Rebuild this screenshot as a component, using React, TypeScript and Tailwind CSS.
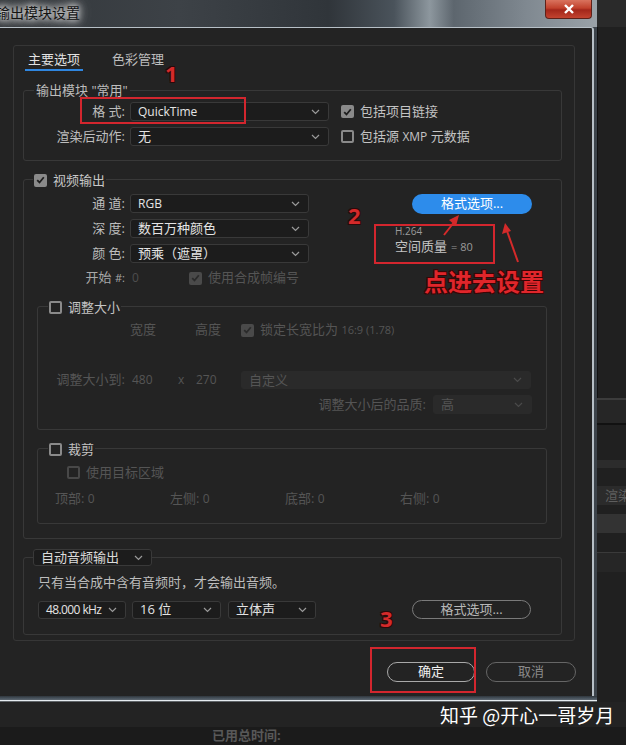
import React from "react";

const Chevron = ({ color = "#9a9a9a" }: { color?: string }) => (
  <svg width="9" height="6" viewBox="0 0 9 6" fill="none">
    <path d="M1 1l3.5 3.5L8 1" stroke={color} strokeWidth="1.2" />
  </svg>
);

function Select({
  className,
  text,
  dim = false,
  textCls = "",
}: {
  className: string;
  text: string;
  dim?: boolean;
  textCls?: string;
}) {
  return (
    <div
      className={`flex shrink-0 items-center justify-between rounded-[3px] border pl-[7px] pr-[8px] ${
        dim
          ? "border-[#2a2a2a] bg-[#2a2a2a] text-[#555555]"
          : "border-[#393939] bg-[#1c1c1c] text-[#e4e4e4]"
      } ${className}`}
    >
      <span className={`leading-none ${textCls}`}>{text}</span>
      <Chevron color={dim ? "#4a4a4a" : "#9a9a9a"} />
    </div>
  );
}

function Check({
  checked = false,
  dim = false,
  className = "",
}: {
  checked?: boolean;
  dim?: boolean;
  className?: string;
}) {
  if (checked) {
    return (
      <div
        className={`flex h-[13px] w-[13px] shrink-0 items-center justify-center rounded-[2px] ${
          dim ? "bg-[#4a4a4a]" : "bg-[#8a8a8a]"
        } ${className}`}
      >
        <svg width="9" height="8" viewBox="0 0 9 8" fill="none">
          <path
            d="M1.2 4.2l2.3 2.3L7.8 1.2"
            stroke={dim ? "#2b2b2b" : "#1e1e1e"}
            strokeWidth="1.8"
          />
        </svg>
      </div>
    );
  }
  return (
    <div
      className={`h-[13px] w-[13px] shrink-0 rounded-[2px] border-2 ${
        dim ? "border-[#484848]" : "border-[#8a8a8a]"
      } ${className}`}
    />
  );
}

function Group({
  legend,
  legendCls,
  className,
  children,
}: {
  legend: React.ReactNode;
  legendCls: string;
  className: string;
  children: React.ReactNode;
}) {
  return (
    <div className={`relative rounded-[3px] border border-[#383838] ${className}`}>
      <div className={`absolute flex items-center bg-[#232323] ${legendCls}`}>{legend}</div>
      {children}
    </div>
  );
}

export default function App() {
  return (
    <div className="relative h-[745px] w-[626px] overflow-hidden bg-[#1f1f1f] font-['Open_Sans','Noto_Sans_CJK_SC',sans-serif] text-[13px] text-[#c4c4c4]">
      <div className="flex h-[702px]">
        {/* window */}
        <div className="flex w-[597px] flex-col">
          {/* title bar */}
          <div className="flex h-[27px] items-start bg-[linear-gradient(90deg,#33373b_0%,#3d4247_30%,#30353a_55%,#4a535b_66%,#8d979e_72%,#5d666e_76%,#7f8890_88%,#9aa2a8_100%)]">
            <span className="-ml-[4px] mt-[4px] whitespace-nowrap text-[14px] leading-[18px] text-[#141414] [text-shadow:0_0_6px_#ffffff,0_0_10px_#e0e0e0,0_0_14px_#c8c8c8]">
              输出模块设置
            </span>
            <div className="ml-auto mr-[5px] flex h-[19px] w-[47px] items-center justify-center rounded-b-[4px] border border-t-0 border-[#5e2119] bg-[linear-gradient(180deg,#d9735e_0%,#c1412c_45%,#a3261a_55%,#c2432f_100%)]">
              <svg width="12" height="10" viewBox="0 0 12 10">
                <path d="M2 1l8 8M10 1L2 9" stroke="#ffffff" strokeWidth="2.4" />
              </svg>
            </div>
          </div>
          {/* body */}
          <div className="flex flex-1 bg-[#3d444b] pr-[3px]">
            <div className="flex flex-1 flex-col rounded-tr-[3px] border-r-2 border-t border-[#b7c0c7] bg-[#232323] pl-[13px] pt-[17px]">
              {/* panel */}
              <div className="flex h-[596px] w-[562px] flex-col rounded-[3px] border border-[#363636]">
                {/* tabs */}
                <div className="ml-[11px] mt-[5px] flex gap-[26px]">
                  <div className="border-b-2 border-[#2f86e0] px-[3px] pb-[2px] leading-[16px] text-[#e2e2e2]">
                    主要选项
                  </div>
                  <div className="px-[3px] leading-[16px] text-[#bdbdbd]">色彩管理</div>
                </div>

                {/* 输出模块 */}
                <Group
                  className="ml-[9px] mt-[19px] w-[539px]"
                  legendCls="-top-[9px] left-[10px] px-[2px] leading-[16px]"
                  legend={<span className="text-[#bdbdbd]">输出模块 "常用"</span>}
                >
                  <div className="flex flex-col gap-[6px] pb-[14px] pt-[11px]">
                    <div className="flex h-[19px] items-center">
                      <span className="w-[101px] text-right text-[#bdbdbd]">格 式:</span>
                      <Select className="ml-[5px] h-[19px] w-[199px]" text="QuickTime" textCls="text-[12px]" />
                      <Check checked className="ml-[12px]" />
                      <span className="ml-[6px] text-[#c4c4c4]">包括项目链接</span>
                    </div>
                    <div className="flex h-[19px] items-center">
                      <span className="w-[101px] text-right text-[#bdbdbd]">渲染后动作:</span>
                      <Select className="ml-[5px] h-[19px] w-[199px]" text="无" />
                      <Check className="ml-[12px]" />
                      <span className="ml-[6px] text-[#c4c4c4]">
                        包括源 <span className="text-[12px]">XMP</span> 元数据
                      </span>
                    </div>
                  </div>
                </Group>

                {/* 视频输出 */}
                <Group
                  className="ml-[9px] mt-[18px] w-[539px] pb-[14px]"
                  legendCls="-top-[8px] left-[9px] px-[1px] leading-[16px]"
                  legend={
                    <>
                      <Check checked />
                      <span className="ml-[6px] text-[#c8c8c8]">视频输出</span>
                    </>
                  }
                >
                  <div className="flex pt-[14px]">
                    <div className="flex w-[285px] flex-col gap-[6px]">
                      <div className="flex h-[19px] items-center">
                        <span className="w-[101px] text-right text-[#bdbdbd]">通 道:</span>
                        <Select className="ml-[5px] h-[19px] w-[179px]" text="RGB" textCls="text-[12px]" />
                      </div>
                      <div className="flex h-[19px] items-center">
                        <span className="w-[101px] text-right text-[#bdbdbd]">深 度:</span>
                        <Select className="ml-[5px] h-[19px] w-[179px]" text="数百万种颜色" />
                      </div>
                      <div className="flex h-[19px] items-center">
                        <span className="w-[101px] text-right text-[#bdbdbd]">颜 色:</span>
                        <Select className="ml-[5px] h-[19px] w-[179px]" text="预乘（遮罩）" />
                      </div>
                      <div className="mt-[2px] flex h-[14px] items-center">
                        <span className="w-[101px] text-right text-[#a8a8a8]">
                          开始 <span className="text-[11px]">#:</span>
                        </span>
                        <span className="ml-[7px] w-[7px] text-[12px] text-[#4e4e4e]">0</span>
                        <Check checked dim className="ml-[50px]" />
                        <span className="ml-[6px] text-[#555555]">使用合成帧编号</span>
                      </div>
                    </div>
                    <div className="ml-[86px] flex flex-col">
                      <div className="ml-[17px] flex h-[20px] w-[120px] items-center justify-center rounded-full bg-[#2d8ceb] text-white">
                        格式选项...
                      </div>
                      <div className="mt-[12px] h-[11px] text-[10px] leading-[11px] text-[#9a9a9a]">H.264</div>
                      <div className="mt-[2px] flex h-[15px] items-end leading-[15px] text-[#c4c4c4]">
                        空间质量<span className="ml-[4px] text-[11px] leading-[14px] text-[#9a9a9a]">= 80</span>
                      </div>
                    </div>
                  </div>

                  {/* 调整大小 */}
                  <Group
                    className="ml-[13px] mt-[21px] w-[510px] pb-[15px]"
                    legendCls="-top-[8px] left-[10px] px-[1px] leading-[16px]"
                    legend={
                      <>
                        <Check />
                        <span className="ml-[6px] text-[#c4c4c4]">调整大小</span>
                      </>
                    }
                  >
                    <div className="mt-[16px] flex h-[14px] items-center pl-[92px] text-[#555555]">
                      <span className="w-[65px]">宽度</span>
                      <span className="w-[46px]">高度</span>
                      <Check checked dim />
                      <span className="ml-[6px]">
                        锁定长宽比为 <span className="text-[11px]">16:9 (1.78)</span>
                      </span>
                    </div>
                    <div className="mt-[34px] flex h-[18px] items-center text-[#555555]">
                      <span className="w-[87px] text-right">调整大小到:</span>
                      <span className="ml-[7px] w-[46px] text-[12px]">480</span>
                      <span className="w-[18px] text-[12px]">x</span>
                      <span className="w-[45px] text-[12px]">270</span>
                      <Select dim className="h-[18px] w-[290px]" text="自定义" />
                    </div>
                    <div className="mt-[6px] flex h-[19px] items-center justify-end pr-[14px] text-[#555555]">
                      <span>调整大小后的品质:</span>
                      <Select dim className="ml-[7px] h-[19px] w-[99px]" text="高" />
                    </div>
                  </Group>

                  {/* 裁剪 */}
                  <Group
                    className="ml-[13px] mt-[18px] w-[510px] pb-[18px]"
                    legendCls="-top-[8px] left-[10px] px-[1px] leading-[16px]"
                    legend={
                      <>
                        <Check />
                        <span className="ml-[6px] text-[#c4c4c4]">裁剪</span>
                      </>
                    }
                  >
                    <div className="mt-[17px] flex h-[13px] items-center pl-[29px] text-[#555555]">
                      <Check dim />
                      <span className="ml-[6px]">使用目标区域</span>
                    </div>
                    <div className="mt-[13px] flex h-[13px] items-center pl-[17px] text-[#555555]">
                      <span className="w-[115px]">
                        顶部: <span className="text-[12px]">0</span>
                      </span>
                      <span className="w-[115px]">
                        左侧: <span className="text-[12px]">0</span>
                      </span>
                      <span className="w-[115px]">
                        底部: <span className="text-[12px]">0</span>
                      </span>
                      <span className="w-[115px]">
                        右侧: <span className="text-[12px]">0</span>
                      </span>
                    </div>
                  </Group>
                </Group>

                {/* 音频 */}
                <Group
                  className="ml-[9px] mt-[18px] w-[539px] pb-[15px]"
                  legendCls="-top-[9px] left-[9px]"
                  legend={<Select className="h-[17px] w-[119px]" text="自动音频输出" textCls="text-[#dcdcdc]" />}
                >
                  <div className="mt-[18px] flex h-[14px] items-center pl-[14px] text-[#bdbdbd]">
                    只有当合成中含有音频时，才会输出音频。
                  </div>
                  <div className="mt-[10px] flex h-[19px] items-center pl-[14px]">
                    <Select className="h-[18px] w-[88px]" text="48.000 kHz" textCls="text-[12px] tracking-[-0.6px]" />
                    <Select className="ml-[6px] h-[18px] w-[89px]" text="16 位" />
                    <Select className="ml-[7px] h-[18px] w-[88px]" text="立体声" />
                    <div className="ml-[96px] flex h-[19px] w-[119px] items-center justify-center rounded-full border border-[#7a7a7a] text-[#b8b8b8]">
                      格式选项...
                    </div>
                  </div>
                </Group>
              </div>

              {/* buttons */}
              <div className="mt-[21px] flex w-[563px] justify-end gap-[11px]">
                <div className="flex h-[20px] w-[88px] items-center justify-center rounded-full border border-[#a9a9a9] text-[#f0f0f0]">
                  确定
                </div>
                <div className="flex h-[20px] w-[90px] items-center justify-center rounded-full border border-[#666666] text-[#8a8a8a]">
                  取消
                </div>
              </div>
            </div>
          </div>
          {/* bottom frame */}
          <div className="h-[6px] bg-[linear-gradient(180deg,#2f363d_0%,#4d5862_45%,#59636c_60%,#e6ecf0_75%,#1d2125_100%)]" />
        </div>
        {/* right strip of app behind */}
        <div className="flex min-w-0 flex-1 flex-col overflow-hidden bg-[#202020]">
          <div className="h-[27px] shrink-0 bg-[#2a2a2a]" />
          <div className="h-[371px] shrink-0 border-l border-[#111111]" />
          <div className="h-[2px] shrink-0 bg-[#3c3c3c]" />
          <div className="h-[23px] shrink-0 bg-[#262626]" />
          <div className="h-[2px] shrink-0 bg-[#111111]" />
          <div className="h-[35px] shrink-0" />
          <div className="h-[8px] shrink-0 bg-[#2c2c2c]" />
          <div className="h-[18px] shrink-0" />
          <div className="flex h-[19px] shrink-0 items-center whitespace-nowrap bg-[#2b2b2b] pl-[8px] text-[#5e5e5e]">
            渲染
          </div>
          <div className="h-[9px] shrink-0" />
          <div className="h-[19px] shrink-0 bg-[#333333]" />
          <div className="h-[19px] shrink-0" />
          <div className="h-[20px] shrink-0 border-t border-[#3a3a3a] bg-[#262626]" />
          <div className="flex-1" />
        </div>
      </div>
      <div className="h-[25px] bg-[#232323]" />
      <div className="flex h-[18px] items-center bg-[#1b1b1b] pl-[212px] text-[13px] font-bold text-[#585858]">
        已用总时间:
      </div>

      {/* annotations overlay */}
      <div className="pointer-events-none absolute inset-0">
        <div className="absolute left-[80px] top-[97px] h-[27px] w-[166px] border-2 border-[#d3262e]" />
        <div className="absolute left-[374px] top-[224px] h-[40px] w-[121px] border-2 border-[#d3262e]" />
        <div className="absolute left-[370px] top-[647px] h-[46px] w-[106px] border-2 border-[#d3262e]" />
        <span className="absolute left-[165px] top-[59px] text-[22px] font-bold leading-[28px] text-[#d42a2a] [text-shadow:1px_1px_0_#2a0a0a,-1px_-1px_0_#2a0a0a,1px_-1px_0_#2a0a0a,-1px_1px_0_#2a0a0a]">
          1
        </span>
        <span className="absolute left-[348px] top-[201px] text-[22px] font-bold leading-[28px] text-[#d42a2a] [text-shadow:1px_1px_0_#2a0a0a,-1px_-1px_0_#2a0a0a,1px_-1px_0_#2a0a0a,-1px_1px_0_#2a0a0a]">
          2
        </span>
        <span className="absolute left-[380px] top-[604px] text-[22px] font-bold leading-[28px] text-[#d42a2a] [text-shadow:1px_1px_0_#2a0a0a,-1px_-1px_0_#2a0a0a,1px_-1px_0_#2a0a0a,-1px_1px_0_#2a0a0a]">
          3
        </span>
        <span className="absolute left-[424px] top-[265px] font-['Noto_Sans_CJK_SC',sans-serif] text-[24px] font-bold leading-[32px] text-[#e0262b] [text-shadow:1px_1px_0_#3a0505,-1px_-1px_0_#3a0505,1px_-1px_0_#3a0505,-1px_1px_0_#3a0505]">
          点进去设置
        </span>
        <svg className="absolute left-0 top-0" width="626" height="745" viewBox="0 0 626 745">
          <line x1="444" y1="235" x2="455" y2="221" stroke="#d42a2a" strokeWidth="2" />
          <polygon points="459,215 449,220 456,226" fill="#d42a2a" />
          <line x1="518" y1="262" x2="507" y2="231" stroke="#d42a2a" strokeWidth="2" />
          <polygon points="505,223 502,234 511,231" fill="#d42a2a" />
        </svg>
        <span className="absolute left-[440px] top-[702px] font-['Noto_Sans_CJK_SC',sans-serif] text-[19px] leading-[26px] text-white">
          知乎 @开心一哥岁月
        </span>
      </div>
    </div>
  );
}
